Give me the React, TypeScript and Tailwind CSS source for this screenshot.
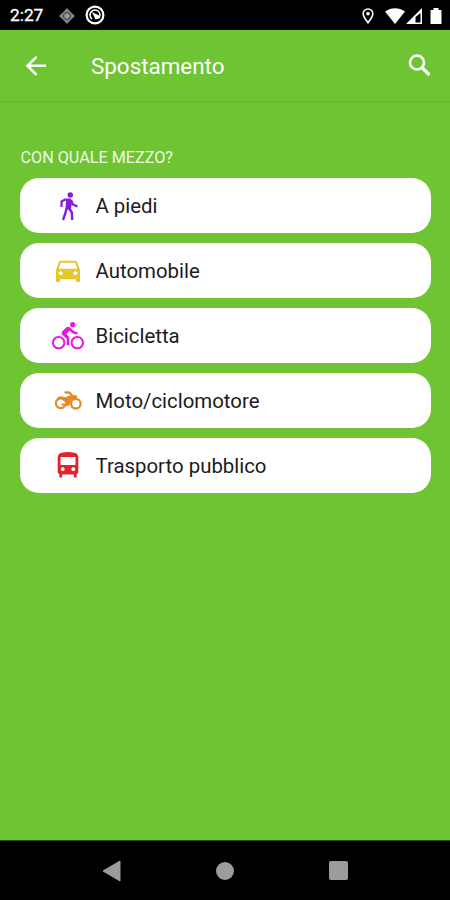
import type { ReactNode } from 'react';
import { MdDirectionsBike, MdDirectionsCar } from 'react-icons/md';

interface Mezzo {
  label: string;
  icon: ReactNode;
}

function WalkIcon() {
  return (
    <svg className="w-[18px] h-[29px] mt-px ml-px text-[#8a1bd8]" viewBox="0 0 18 29" fill="none" stroke="currentColor">
      <circle cx="10.300" cy="3" r="2.700" fill="currentColor" stroke="none" />
      <path d="M5.500 7.300L1.500 9.500v5.500" strokeWidth="2.200" strokeLinejoin="round" />
      <path d="M11 8l2 4.500 4.500 2" strokeWidth="2.200" strokeLinejoin="round" />
      <path d="M5 6.500h5.500l1.700 2.500-1.200 8.500H5.300L6 10z" fill="currentColor" stroke="none" />
      <path d="M6.500 16.500l-1.200 5L3 28" strokeWidth="2.400" strokeLinejoin="round" />
      <path d="M9 16l2.800 4.500.4 7.500" strokeWidth="2.400" strokeLinejoin="round" />
    </svg>
  );
}

function MotoIcon() {
  return (
    <svg className="w-[27px] h-[19px] text-[#e58a2b]" viewBox="0 0 27 19" fill="none" stroke="currentColor">
      <path d="M9.800 9.500A4.900 4.900 0 1 0 10.500 13.500H6.500" strokeWidth="2.200" />
      <circle cx="20.800" cy="12.700" r="4.800" strokeWidth="2.300" />
      <path d="M10.500 1.500h2.800q1.500 0 2.300 1.200L18.500 7.500" strokeWidth="2.300" strokeLinecap="round" />
      <path
        d="M1.500 7.500q2-2.700 5.500-2l4 .7q3-2.500 7.500-2.200l3.500.5v2.500q-6.500.5-7.300 6l-1 2h-3q.2-6-5.700-7z"
        fill="currentColor"
        stroke="none"
      />
    </svg>
  );
}

function BusIcon() {
  return (
    <svg className="w-[22px] h-[26px] mb-[2px] text-[#e3242b]" viewBox="0 0 22 26" fill="currentColor">
      <path
        fillRule="evenodd"
        d="M4.500 0.800q6.500-1.600 13 0Q21 1.500 21.300 5v15q0 1.500-1.600 2v2.800q0 .7-.7.700h-1.600q-.7 0-.7-.7V22.500H5.300v2.300q0 .7-.7.700H3q-.7 0-.7-.7V22Q.7 21.500.700 20V5Q1 1.500 4.500.8zM3.500 5v8h15V5zM5.700 15.300a1.900 1.900 0 1 0 .01 0zM16.300 15.300a1.900 1.900 0 1 0 .01 0z"
      />
    </svg>
  );
}

const mezzi: Mezzo[] = [
  { label: 'A piedi', icon: <WalkIcon /> },
  { label: 'Automobile', icon: <MdDirectionsCar className="w-8 h-8 mb-px text-[#e6c82c]" /> },
  { label: 'Bicicletta', icon: <MdDirectionsBike className="w-8 h-8 text-[#e21bdc]" /> },
  { label: 'Moto/ciclomotore', icon: <MotoIcon /> },
  { label: 'Trasporto pubblico', icon: <BusIcon /> },
];

function StatusBar() {
  return (
    <div className="h-[30px] bg-black text-white flex items-center pl-[10px] pr-[8px] shrink-0">
      <span className="w-[49px] text-[17.3px] leading-none pt-[2px] [-webkit-text-stroke:0.3px_white]">2:27</span>
      <svg className="w-4 h-4 mt-px" viewBox="0 0 16 16">
        <path d="M8 0l3 3.200L16 8l-5 4.800L8 16l-3-3.200L0 8l5-4.800z" fill="#858585" />
        <circle cx="8" cy="8" r="3.600" fill="none" stroke="#444" strokeWidth="1" />
        <circle cx="8" cy="8" r="1.600" fill="#aaa" />
      </svg>
      <svg className="w-5 h-5 ml-[10px]" viewBox="0 0 20 20" fill="none" stroke="#fff">
        <circle cx="10" cy="10" r="8.400" strokeWidth="2.200" />
        <path d="M7 14a5 5 0 1 1 7-1" strokeWidth="1.500" />
        <path d="M7 7l7 3.500v3L10.500 14.500z" fill="#fff" stroke="none" />
      </svg>
      <div className="flex-1" />
      <svg className="w-3 h-4 mt-px" viewBox="0 0 12 16" fill="none" stroke="#fff">
        <path
          d="M6 14.700C3.500 11.500 1.200 8.700 1.200 5.800a4.800 4.800 0 0 1 9.600 0C10.800 8.700 8.500 11.500 6 14.700z"
          strokeWidth="1.600"
        />
        <circle cx="6" cy="5.800" r="1.800" fill="#fff" stroke="none" />
      </svg>
      <svg className="w-5 h-4 ml-[11px] mt-px" viewBox="0 0 20 16">
        <path d="M0 3.500C6 -1 14 -1 20 3.500L10 16z" fill="#fff" />
      </svg>
      <svg className="w-4 h-4 ml-px mt-px" viewBox="0 0 16 16">
        <path d="M16 0v16H0z" fill="#fff" />
        <path d="M14.500 5v9.500H9.500V9z" fill="#000" />
      </svg>
      <svg className="w-3 h-4 ml-[8px] mt-px" viewBox="0 0 12 16">
        <path d="M3.500 0h5v2h2.500q.5 0 .5.500v13q0 .5-.5.500H1q-.5 0-.5-.5v-13Q.5 2 1 2h2.500z" fill="#fff" />
      </svg>
    </div>
  );
}

function NavBar() {
  return (
    <div className="h-[60px] bg-black border-t border-[#2b4d18] flex items-center justify-between px-[102px] shrink-0">
      <svg className="w-[19px] h-[22px]" viewBox="0 0 19 22" fill="#9c9c9c">
        <path d="M1 11L18 1v20z" stroke="#9c9c9c" strokeLinejoin="round" />
      </svg>
      <div className="w-[18px] h-[18px] rounded-full bg-[#9c9c9c]" />
      <div className="w-[19px] h-[19px] rounded-[2px] bg-[#9c9c9c]" />
    </div>
  );
}

export default function App() {
  return (
    <div className="w-full h-[900px] bg-[#6fc434] flex flex-col font-['Roboto',sans-serif]">
      <StatusBar />

      <header className="h-[73px] flex items-center border-b-2 border-[#69bb30] pl-[22px] pr-4 text-white shrink-0">
        <svg className="w-7 h-7" viewBox="0 0 28 28" fill="none" stroke="currentColor" strokeWidth="2.600">
          <path d="M24 13.800H6M14.500 4.800l-9 9 9 9" />
        </svg>
        <h1 className="flex-1 ml-[41px] pt-[3px] text-[22.4px]">Spostamento</h1>
        <svg className="w-7 h-7" viewBox="0 0 28 28" fill="none" stroke="currentColor">
          <circle cx="11" cy="10.500" r="7" strokeWidth="2.600" />
          <path d="M16 15.500l7.500 7.500" strokeWidth="3.200" />
        </svg>
      </header>

      <main className="flex-1 pl-[20px] pr-[19px] pt-[45px]">
        <h2 className="h-[30px] pl-[0.5px] text-[16.2px] leading-5 text-[#eefae6]">CON QUALE MEZZO?</h2>
        <div className="flex flex-col gap-[10px]">
          {mezzi.map((mezzo) => (
            <button
              key={mezzo.label}
              className="h-[55px] bg-white rounded-[19px] flex items-center pl-[32px] text-left"
            >
              <span className="w-8 flex justify-center">{mezzo.icon}</span>
              <span className="ml-[11.5px] pt-[2px] text-[20.4px] text-[#1c1c1c]">{mezzo.label}</span>
            </button>
          ))}
        </div>
      </main>

      <NavBar />
    </div>
  );
}
